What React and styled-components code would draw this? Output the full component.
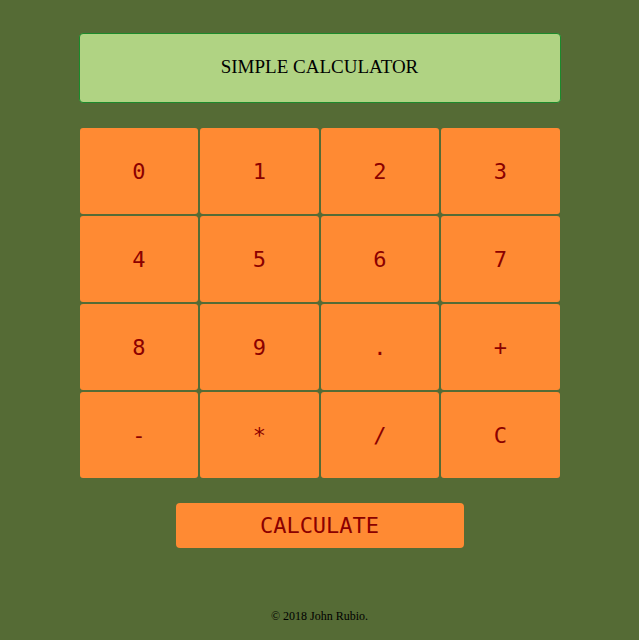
import React, { useState } from 'react';
import styled, { createGlobalStyle } from 'styled-components';

const GlobalStyle = createGlobalStyle`
  body {
    margin: 0;
    background-color: #556b35;
    font-family: "Liberation Serif", "Times New Roman", serif;
  }
`;

const keys = ['0', '1', '2', '3', '4', '5', '6', '7', '8', '9', '.', '+', '-', '*', '/', 'C'];

const App = () => {
  const [expr, setExpr] = useState('');

  const handleKey = (k) => {
    if (k === 'C') {
      setExpr('');
      return;
    }
    setExpr((prev) => prev + k);
  };

  const handleCalculate = () => {
    try {
      // eslint-disable-next-line no-new-func
      setExpr(String(Function(`return (${expr})`)()));
    } catch (e) {
      setExpr('');
    }
  };

  return (
    <Page>
      <GlobalStyle />
      <Display>{expr || 'SIMPLE CALCULATOR'}</Display>
      <KeyGrid>
        {keys.map((k) => (
          <Key key={k} onClick={() => handleKey(k)}>
            {k}
          </Key>
        ))}
      </KeyGrid>
      <CalculateButton onClick={handleCalculate}>CALCULATE</CalculateButton>
      <Footer>© 2018 John Rubio.</Footer>
    </Page>
  );
};

export default App;

const Page = styled.div`
  width: 480px;
  margin: 0 auto;
  padding-top: 33px;
  display: flex;
  flex-direction: column;
  align-items: center;
`;

const Display = styled.div`
  box-sizing: border-box;
  width: 482px;
  height: 70px;
  padding-bottom: 2px;
  display: flex;
  align-items: center;
  justify-content: center;
  background-color: #b0d383;
  border: 1px solid #1c8a2c;
  border-radius: 4px;
  font-size: 19px;
  color: #000;
`;

const KeyGrid = styled.div`
  margin-top: 25px;
  width: 480px;
  display: grid;
  grid-template-columns: repeat(4, 1fr);
  grid-auto-rows: 86px;
  gap: 2px;
`;

const Key = styled.button`
  background-color: #ff8a33;
  color: #8b0000;
  border: none;
  border-radius: 3px;
  font-family: "DejaVu Sans Mono", "Liberation Mono", monospace;
  font-size: 22px;
  cursor: pointer;
  padding: 0;

  &:hover {
    background-color: #ff9a4d;
  }
`;

const CalculateButton = styled.button`
  margin-top: 25px;
  width: 288px;
  height: 45px;
  background-color: #ff8a33;
  color: #8b0000;
  border: none;
  border-radius: 4px;
  font-family: "DejaVu Sans Mono", "Liberation Mono", monospace;
  font-size: 22px;
  cursor: pointer;
  padding: 0;
`;

const Footer = styled.div`
  margin-top: 61px;
  font-size: 12px;
  color: #000;
`;
